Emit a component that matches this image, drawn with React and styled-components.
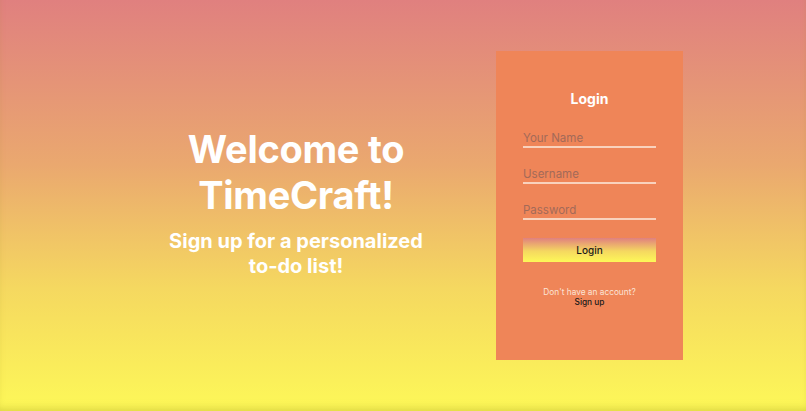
import React, { useState } from "react";
import styled, { createGlobalStyle } from "styled-components";

const GlobalStyle = createGlobalStyle`
  html, body {
    margin: 0;
    padding: 0;
    height: 100%;
  }
  body {
    font-family: Inter, "Noto Sans", sans-serif;
  }
  #root {
    height: 100%;
  }
`;

const Login = () => {
  const [form, setForm] = useState({ name: "", username: "", password: "" });

  const update = (key) => (e) => setForm({ ...form, [key]: e.target.value });

  return (
    <>
      <GlobalStyle />
      <Page>
        <Row>
          <Intro>
            <Heading>
              Welcome to
              <br />
              TimeCraft!
            </Heading>
            <Tagline>
              Sign up for a personalized
              <br />
              to-do list!
            </Tagline>
          </Intro>
          <Card>
            <CardTitle>Login</CardTitle>
            <Form onSubmit={(e) => e.preventDefault()}>
              <Field
                placeholder="Your Name"
                value={form.name}
                onChange={update("name")}
              />
              <Field
                placeholder="Username"
                value={form.username}
                onChange={update("username")}
              />
              <Field
                type="password"
                placeholder="Password"
                value={form.password}
                onChange={update("password")}
              />
              <Button type="submit">Login</Button>
            </Form>
            <Footer>
              <Muted>Don't have an account?</Muted>
              <SignUp href="#">Sign up</SignUp>
            </Footer>
          </Card>
        </Row>
      </Page>
    </>
  );
};

const Page = styled.div`
  height: 100%;
  min-height: 411px;
  background: linear-gradient(180deg, #e0807f 0%, #eaa86f 40%, #f5d860 70%, #fdf858 100%);
  display: flex;
  align-items: center;
  box-shadow: inset 0 -6px 8px -4px rgba(150, 140, 20, 0.35);
`;

const Row = styled.div`
  display: flex;
  align-items: center;
  gap: 50px;
  padding-left: 146px;
`;

const Intro = styled.div`
  width: 300px;
  display: flex;
  flex-direction: column;
  align-items: center;
  text-align: center;
  color: #ffffff;
  padding-bottom: 7px;
`;

const Heading = styled.h1`
  margin: 0;
  font-size: 38px;
  line-height: 46px;
  font-weight: 700;
  letter-spacing: -0.3px;
`;

const Tagline = styled.h2`
  margin: 11px 0 0;
  font-size: 20px;
  line-height: 25px;
  font-weight: 700;
`;

const Card = styled.div`
  width: 187px;
  height: 309px;
  box-sizing: border-box;
  background: #ef8558;
  display: flex;
  flex-direction: column;
  align-items: center;
  padding-top: 40px;
`;

const CardTitle = styled.h3`
  margin: 0;
  font-size: 14px;
  line-height: 16px;
  font-weight: 700;
  color: #ffffff;
`;

const Form = styled.form`
  width: 133px;
  display: flex;
  flex-direction: column;
  margin-top: 24px;
`;

const Field = styled.input`
  width: 100%;
  box-sizing: border-box;
  border: none;
  border-bottom: 2px solid #f9d2bd;
  background: transparent;
  padding: 0 0 2px;
  height: 17px;
  margin-bottom: 19px;
  font-family: Inter, "Noto Sans", sans-serif;
  font-size: 11.5px;
  color: #4a2a20;
  outline: none;

  &::placeholder {
    color: #a36a58;
  }
`;

const Button = styled.button`
  width: 100%;
  height: 24px;
  margin-top: -1px;
  border: none;
  background: linear-gradient(180deg, #e0807f 0%, #f5d860 55%, #fdf858 100%);
  font-family: Inter, "Noto Sans", sans-serif;
  font-size: 10px;
  font-weight: 500;
  color: #1a1a1a;
  cursor: pointer;
`;

const Footer = styled.div`
  margin-top: 25px;
  display: flex;
  flex-direction: column;
  align-items: center;
  font-size: 8.3px;
  line-height: 10px;
`;

const Muted = styled.span`
  color: #fbe3d6;
`;

const SignUp = styled.a`
  color: #1a1a1a;
  font-weight: 500;
  text-decoration: none;
`;

export default Login;
